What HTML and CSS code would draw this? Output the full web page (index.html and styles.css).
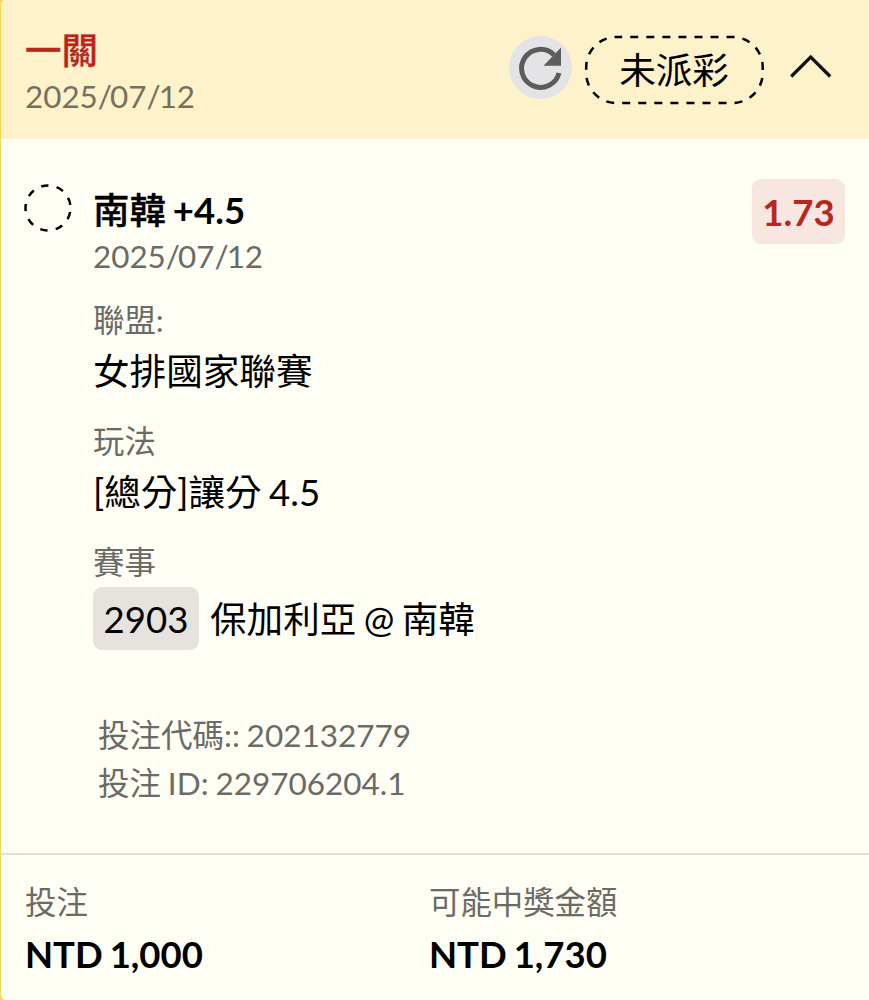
FILE: index.html
```html
<!DOCTYPE html>
<html lang="zh-Hant">
<head>
<meta charset="utf-8">
<title>投注</title>
<link rel="stylesheet" href="styles.css">
</head>
<body>
<article class="ticket">
  <header class="ticket-header">
    <div class="heading">
      <h1 class="title">一關</h1>
      <p class="date">2025<span class="sep">/</span>07<span class="sep">/</span>12</p>
    </div>
    <button class="refresh" aria-label="refresh">
      <svg width="63" height="63" viewBox="0 0 63 63"><path d="M50 37A19 19 0 1 1 45 18.9" fill="none" stroke="#5c5c5c" stroke-width="5"/><path d="M52 11.5V29.8H34.5Z" fill="#5c5c5c"/></svg>
    </button>
    <div class="status">
      <svg class="outline" width="178" height="70" viewBox="0 0 178 70"><rect x="1.2" y="2" width="176.5" height="66" rx="30" fill="none" stroke="#000" stroke-width="2.5" stroke-dasharray="8 8.055" stroke-dashoffset="2"/></svg>
      <span>未派彩</span>
    </div>
    <svg class="chevron" width="42" height="26" viewBox="0 0 42 26"><path d="M1.2 23.5L20.7 4L40.2 23.5" fill="none" stroke="#111" stroke-width="3.2"/></svg>
  </header>
  <section class="selection">
    <svg class="pending" width="48" height="50" viewBox="0 0 48 50"><circle cx="24" cy="25" r="22.5" fill="none" stroke="#000" stroke-width="2.5" stroke-dasharray="7.4 8.31" stroke-dashoffset="-4.15"/></svg>
    <div class="details">
      <h2 class="pick"><span class="team">南韓</span> +4.5</h2>
      <p class="date">2025<span class="sep">/</span>07<span class="sep">/</span>12</p>
      <dl class="facts">
        <dt>聯盟:</dt><dd>女排國家聯賽</dd>
        <dt>玩法</dt><dd>[總分]讓分 4.5</dd>
        <dt>賽事</dt><dd class="match"><span class="match-no">2903</span><span>保加利亞 @ 南韓</span></dd>
      </dl>
      <div class="codes">
        <p>投注代碼:: 202132779</p>
        <p>投注 ID: 229706204.1</p>
      </div>
    </div>
    <div class="odds">1.73</div>
  </section>
  <footer class="totals">
    <div><p class="label">投注</p><p class="amount">NTD 1,000</p></div>
    <div><p class="label">可能中獎金額</p><p class="amount">NTD 1,730</p></div>
  </footer>
</article>
</body>
</html>
```
FILE: styles.css
```css
* { box-sizing: border-box; margin: 0; padding: 0; }
body {
  background: #f5d64e;
  font-family: Lato, "Noto Sans CJK TC", sans-serif;
  font-size: 36.6px;
  word-spacing: -2px;
  color: #000;
}
svg { display: block; }
.ticket {
  height: 1000px;
  border-left: 1px solid #f5d64e;
  border-radius: 5px 0 0 5px;
  background: #fffef5;
  overflow: hidden;
  display: flex;
  flex-direction: column;
}
.ticket-header {
  height: 139px;
  padding: 27px 37px 0 24px;
  background: #fef2cb;
  display: flex;
  align-items: flex-start;
}
.heading { flex: 1; }
.title { font-size: 36.5px; font-weight: 500; line-height: 46px; color: #b9271c; -webkit-text-stroke: 0.3px #b9271c; }
.date { font-size: 31.4px; line-height: 46px; color: #6a6a66; }
.sep { letter-spacing: -2px; }
.ticket-header .date { color: #76705d; }
.refresh {
  width: 63px;
  height: 63px;
  margin: 9px 13px 0 0;
  border: 0;
  border-radius: 50%;
  background: #e4e4e6;
}
.status {
  position: relative;
  width: 178px;
  height: 70px;
  margin: 8px 27px 0 0;
  line-height: 71px;
  text-align: center;
}
.outline { position: absolute; inset: 0; overflow: visible; }
.chevron { margin-top: 26px; }
.selection {
  height: 714px;
  padding: 40px 24px 0 23px;
  display: flex;
  align-items: flex-start;
}
.pending { margin: 4px 21px 0 0; }
.details { flex: 1; padding-top: 8px; }
.pick { font-size: 36.5px; font-weight: 700; line-height: 47px; }
.team { font-weight: 500; -webkit-text-stroke: 0.3px #000; }
.details .date { margin-top: -1px; }
.facts { padding-top: 18px; }
.facts dt { font-size: 31.4px; line-height: 46px; color: #6a6a66; }
.facts dd { line-height: 56px; margin-bottom: 19px; }
.facts .match { display: flex; gap: 11px; margin: 2px 0 0; line-height: 65px; }
.match-no {
  width: 106px;
  height: 63px;
  text-align: center;
  border-radius: 9px;
  background: #e6e3de;
}
.codes { padding: 60px 0 0 5px; font-size: 31.5px; line-height: 47.5px; color: #6a6a66; word-spacing: -1.2px; }
.odds {
  width: 93px;
  height: 65px;
  border-radius: 9px;
  background: #f8e6e1;
  color: #b9271c;
  font-weight: 700;
  line-height: 67px;
  text-align: center;
}
.totals {
  flex: 1;
  border-top: 2px solid #e3e0da;
  padding: 23px 24px 0;
  display: grid;
  grid-template-columns: 404px 1fr;
}
.label { font-size: 31.4px; line-height: 48px; color: #6a6a66; }
.amount { font-size: 36.5px; font-weight: 700; line-height: 56px; }
```
